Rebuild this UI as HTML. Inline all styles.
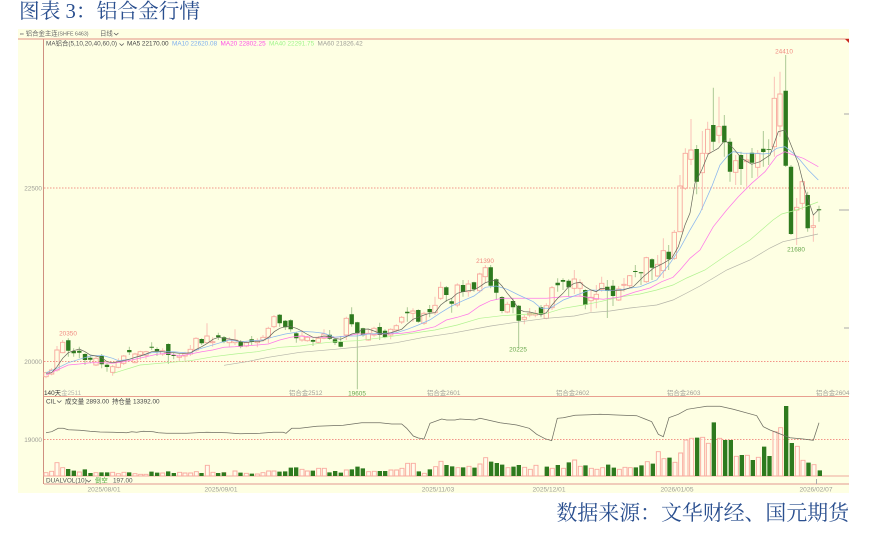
<!DOCTYPE html>
<html><head><meta charset="utf-8"><style>
html,body{margin:0;padding:0;background:#fff;width:881px;height:538px;overflow:hidden}
svg{position:absolute;left:0;top:0}
.t{font-family:"Liberation Sans","Noto Sans CJK SC",sans-serif;font-size:6.4px;fill:#666}
.g{fill:#a0a098}
.d{font-size:6.6px}
.h{position:absolute;color:#2a4f8f;font-family:"Liberation Serif","Noto Serif CJK SC",serif;line-height:24px;white-space:pre}
</style></head><body>
<div class="h" style="left:19px;top:0;font-size:20.7px">图表 3：铝合金行情</div>
<div class="h" style="right:32px;top:501px;font-size:20.9px">数据来源：文华财经、国元期货</div>
<svg width="881" height="538" viewBox="0 0 881 538" style="filter:blur(.22px)">
<rect x="18" y="29" width="831" height="464" fill="#feffe3"/>
<path d="M18 39H849" stroke="#ecb5a5" stroke-width="1.6"/>
<path d="M43.5 39V484" stroke="#cf9080"/>
<path d="M44 396.5H849" stroke="#e8a090"/>
<path d="M44 476H849" stroke="#eea89c"/>
<path d="M44 484H849" stroke="#ecbcac" stroke-width="1.5"/>
<path d="M845 39h4v4z" fill="#c8281e"/>
<path d="M844 114h5M839 210h10M844 328h5M816.5 479v5" stroke="#aaa"/>
<path d="M44 188H849M44 361.5H849M44 439.5H849" stroke="#f29488" stroke-dasharray="1.5 1.5"/>

<!-- up wicks -->
<path fill="none" stroke="#f9bcb2" stroke-width=".9" d="M46 371.7V372.7M46 376.7V378.3M51.6 368.3V370M51.6 374V375.3M57 346V350M57 370V371.7M62.7 340V342.3M62.7 352.7V353.3M96 356V358.3M96 365V366M112.7 365V366.7M112.7 372.3V375.7M118.3 358.3V361.7M118.3 367.3V368.3M123.7 355V356M123.7 363.3V365M135 352.7V354M135 362.7V363.3M140.3 350.7V351.7M140.3 355V360M146 350.7V351.7M146 355.3V359.3M162.7 348.3V350.7M162.7 354V356M179.3 354V356M179.3 357.3V361.7M185 351.7V353.3M185 356V360.7M190.3 345V349.3M190.3 354V356M196 337.3V338.3M196 350V351.7M207 323.3V336M207 342.7V343.3M212.7 337.3V341.7M212.7 342.7V346.7M229.3 337.3V340M229.3 342.7V346.7M235 329.3V340M235 342.7V345M246.3 341.7V342.7M246.3 346V347.3M257.3 338.3V340.7M257.3 342.7V347.3M263 335V337.3M263 340V341.7M268.3 326.7V328.3M268.3 337.3V343.3M274 315V316.7M274 326.7V328.3M302 330V336M302 340V341.7M307.3 336V337.3M307.3 340.7V341.7M318.3 336V338.3M318.3 342.3V343.3M324 329.3V334M324 338.3V339.3M346.3 316.7V318.3M346.3 335V340M368.3 329.3V333.3M368.3 340V340.7M374 326.7V328.3M374 335V336.7M390.7 328.3V329.3M390.7 335V339.3M396.3 324.3V325.7M396.3 330V331.7M401.7 316V317.3M401.7 322V324M413 308.3V311M413 313.3V321.7M424 311.7V313.3M424 323.3V325M435 296.7V305.3M435 312.7V315M440.7 281.7V287.3M440.7 298.3V300M457.3 283.3V285M457.3 305V307.3M468.3 280V284M468.3 291.7V296.7M479.7 272.7V274M479.7 290.7V292.7M485.3 265V267.7M485.3 276.7V283.3M507.3 301.7V304.3M507.3 312V313.3M524.3 315V317.3M524.3 319.3V324.3M529.7 308V313.3M529.7 315V317.3M535.3 310V313.3M535.3 315V317.3M546.3 303.3V305.7M546.3 318.3V319.3M552 286V287.7M552 307.7V310M574.3 270V279M574.3 288.3V294M580 279.3V282.7M580 288.3V296.7M591 290V297.3M591 300.7V311.7M596.3 285V294.3M596.3 299.3V308.3M601.7 276.7V283.3M601.7 289.3V291.7M618.7 286V289M618.7 300V301M624 278V284.3M624 285.3V291.7M629.7 275V275.7M629.7 285.7V288M646.3 256.7V257.7M646.3 281.7V283M657.7 255V264.3M657.7 276V276.7M663.3 238.3V250.7M663.3 270.7V278M674.3 230V232.3M674.3 258.3V260M680 175V186M680 231.7V232M685.3 148.3V153.3M685.3 188.3V190M691 119V150M691 159.3V165M702.3 131V153.3M702.3 172.7V210M707.7 121.7V129.3M707.7 153.3V155M719 96.7V126.7M719 135.3V143.3M735.7 155V160.7M735.7 172.3V185M746.7 153V160M746.7 161.7V186.7M757.7 150V153.3M757.7 167.3V176.7M774.3 76.7V98.3M774.3 146.7V156.7M780 71.7V94M780 126V136.7M796.7 198V207.3M796.7 210V245M802.3 180V181.7M802.3 203.3V210M813.3 215V225.7M813.3 227.3V241.7"/>
<!-- up bodies -->
<path fill="none" stroke="#f8a89d" stroke-width=".9" d="M43.8 372.7h4.4V376.7h-4.4zM49.4 370h4.4V374h-4.4zM54.8 350h4.4V370h-4.4zM60.5 342.3h4.4V352.7h-4.4zM93.8 358.3h4.4V365h-4.4zM110.5 366.7h4.4V372.3h-4.4zM116.1 361.7h4.4V367.3h-4.4zM121.5 356h4.4V363.3h-4.4zM132.8 354h4.4V362.7h-4.4zM138.1 351.7h4.4V355h-4.4zM143.8 351.7h4.4V355.3h-4.4zM160.5 350.7h4.4V354h-4.4zM177.1 356h4.4V357.3h-4.4zM182.8 353.3h4.4V356h-4.4zM188.1 349.3h4.4V354h-4.4zM193.8 338.3h4.4V350h-4.4zM204.8 336h4.4V342.7h-4.4zM210.5 341.7h4.4V342.7h-4.4zM227.1 340h4.4V342.7h-4.4zM232.8 340h4.4V342.7h-4.4zM244.1 342.7h4.4V346h-4.4zM255.1 340.7h4.4V342.7h-4.4zM260.8 337.3h4.4V340h-4.4zM266.1 328.3h4.4V337.3h-4.4zM271.8 316.7h4.4V326.7h-4.4zM299.8 336h4.4V340h-4.4zM305.1 337.3h4.4V340.7h-4.4zM316.1 338.3h4.4V342.3h-4.4zM321.8 334h4.4V338.3h-4.4zM344.1 318.3h4.4V335h-4.4zM366.1 333.3h4.4V340h-4.4zM371.8 328.3h4.4V335h-4.4zM388.5 329.3h4.4V335h-4.4zM394.1 325.7h4.4V330h-4.4zM399.5 317.3h4.4V322h-4.4zM410.8 311h4.4V313.3h-4.4zM421.8 313.3h4.4V323.3h-4.4zM432.8 305.3h4.4V312.7h-4.4zM438.5 287.3h4.4V298.3h-4.4zM455.1 285h4.4V305h-4.4zM466.1 284h4.4V291.7h-4.4zM477.5 274h4.4V290.7h-4.4zM483.1 267.7h4.4V276.7h-4.4zM505.1 304.3h4.4V312h-4.4zM522.1 317.3h4.4V319.3h-4.4zM527.5 313.3h4.4V315h-4.4zM533.1 313.3h4.4V315h-4.4zM544.1 305.7h4.4V318.3h-4.4zM549.8 287.7h4.4V307.7h-4.4zM572.1 279h4.4V288.3h-4.4zM577.8 282.7h4.4V288.3h-4.4zM588.8 297.3h4.4V300.7h-4.4zM594.1 294.3h4.4V299.3h-4.4zM599.5 283.3h4.4V289.3h-4.4zM616.5 289h4.4V300h-4.4zM621.8 284.3h4.4V285.3h-4.4zM627.5 275.7h4.4V285.7h-4.4zM644.1 257.7h4.4V281.7h-4.4zM655.5 264.3h4.4V276h-4.4zM661.1 250.7h4.4V270.7h-4.4zM672.1 232.3h4.4V258.3h-4.4zM677.8 186h4.4V231.7h-4.4zM683.1 153.3h4.4V188.3h-4.4zM688.8 150h4.4V159.3h-4.4zM700.1 153.3h4.4V172.7h-4.4zM705.5 129.3h4.4V153.3h-4.4zM716.8 126.7h4.4V135.3h-4.4zM733.5 160.7h4.4V172.3h-4.4zM744.5 160h4.4V161.7h-4.4zM755.5 153.3h4.4V167.3h-4.4zM772.1 98.3h4.4V146.7h-4.4zM777.8 94h4.4V126h-4.4zM794.5 207.3h4.4V210h-4.4zM800.1 181.7h4.4V203.3h-4.4zM811.1 225.7h4.4V227.3h-4.4z"/>
<!-- down wicks -->
<path fill="none" stroke="#a3c48c" stroke-width=".9" d="M68.3 338.3V356.7M73.7 348.3V356.7M79.3 346.7V358.3M85 353.3V365M90.3 356V363.3M101.7 354V368.3M107 363.3V371.7M129.3 346.7V355M151.7 342.3V350M157 347.3V356M168.3 343.3V364M173.7 352.7V359.3M201.7 338.3V345M218.3 332.7V340M224 336V343.3M240.7 340V348.3M251.7 336V345M279.7 314V326.7M285.3 320V330M290.7 319.3V331.7M296.3 331.7V342.7M313 338.7V346M329.7 330V340M335 338.3V345M340.7 336V347.3M351.7 307.3V326.7M357.3 321.7V389.3M363 327.7V336.7M379.7 322.7V340M385 329.3V338.3M407.3 307.3V321.7M418.3 309.3V322.7M429.7 305V317.3M446.3 286V301.7M451.7 298.3V312.7M463 280V296.7M474 281.7V291.7M490.7 265V288.3M496.3 278.3V300M502 296V313.3M513 298.3V313.3M518.7 305V348.3M541 305V317.3M557.7 278.3V291.7M563 278.3V290M568.7 279.3V296.7M585.3 289.3V309.3M607.3 280V318M613 280V306M635.3 265V277.3M641 271.7V285M652 258.3V280M668.7 245V270M696.7 145V194.3M713.3 87.7V150M724.3 115V156.7M730 138.3V181.7M741 151.7V185M752 148V178M763.3 131V166.7M768.7 139.3V165M785.7 55V167M791 165V235M807.7 191.7V231.7M819 205.7V221.7"/>
<!-- down bodies -->
<path fill="#2e7a1e" d="M66.1 340.3h4.4V350.7h-4.4zM71.5 351h4.4V353.3h-4.4zM77.1 350.7h4.4V352.7h-4.4zM82.8 354h4.4V360h-4.4zM88.1 357.7h4.4V359.7h-4.4zM99.5 356h4.4V364.3h-4.4zM104.8 364.7h4.4V367h-4.4zM127.1 350h4.4V352.3h-4.4zM149.5 346.7h4.4V347.7h-4.4zM154.8 349h4.4V351.7h-4.4zM166.1 344h4.4V355h-4.4zM171.5 355h4.4V356h-4.4zM199.5 339h4.4V343.3h-4.4zM216.1 335.3h4.4V337.3h-4.4zM221.8 337.3h4.4V341.7h-4.4zM238.5 341.7h4.4V346.7h-4.4zM249.5 339.3h4.4V342h-4.4zM277.5 314.7h4.4V323.3h-4.4zM283.1 320.7h4.4V327.3h-4.4zM288.5 320.3h4.4V329.3h-4.4zM294.1 333.3h4.4V338.3h-4.4zM310.8 340h4.4V341.7h-4.4zM327.5 334.7h4.4V338.7h-4.4zM332.8 339.3h4.4V342.7h-4.4zM338.5 342h4.4V346.7h-4.4zM349.5 314.3h4.4V324.3h-4.4zM355.1 322.3h4.4V333.3h-4.4zM360.8 328.3h4.4V335.3h-4.4zM377.5 327h4.4V335h-4.4zM382.8 330.7h4.4V337.3h-4.4zM405.1 311.7h4.4V313.3h-4.4zM416.1 310h4.4V321.7h-4.4zM427.5 309h4.4V312.3h-4.4zM444.1 287.3h4.4V295h-4.4zM449.5 301.3h4.4V303.7h-4.4zM460.8 285h4.4V292h-4.4zM471.8 282.3h4.4V289.3h-4.4zM488.5 267.3h4.4V285.7h-4.4zM494.1 279.3h4.4V292.7h-4.4zM499.8 297h4.4V311h-4.4zM510.8 301h4.4V307.3h-4.4zM516.5 305.7h4.4V320.7h-4.4zM538.8 307.3h4.4V314.3h-4.4zM555.5 282.7h4.4V285.3h-4.4zM560.8 280h4.4V281.7h-4.4zM566.5 280.7h4.4V287.3h-4.4zM583.1 290h4.4V305h-4.4zM605.1 286.7h4.4V290.7h-4.4zM610.8 285.7h4.4V296h-4.4zM633.1 271h4.4V272h-4.4zM638.8 272.3h4.4V273.3h-4.4zM649.8 259.3h4.4V267.7h-4.4zM666.5 251.7h4.4V259.3h-4.4zM694.5 149h4.4V181.7h-4.4zM711.1 125h4.4V141.7h-4.4zM722.1 125.7h4.4V142.3h-4.4zM727.8 141.7h4.4V171.7h-4.4zM738.8 155h4.4V169h-4.4zM749.8 152.7h4.4V162.7h-4.4zM761.1 148.7h4.4V152h-4.4zM766.5 149h4.4V149.7h-4.4zM783.5 90.7h4.4V165.7h-4.4zM788.8 166.7h4.4V234h-4.4zM805.5 195h4.4V228.3h-4.4zM816.8 209.3h4.4V210.3h-4.4z"/>

<!-- MA60 -->
<polyline fill="none" stroke="#b4b4a8" stroke-width=".7" points="224,365.3 246.7,361.7 268.3,357.3 300,352.3 335,349.3 368.3,346 396.3,342.7 424,337.3 451.7,333.3 490.7,326 513.3,322.7 546.7,318.3 574.3,316 590,312.7 610,311 630,308 656.7,305 673,300 686.7,293 700,286 726.7,270 750,260 770,248 783,241.7 800,238 818,234"/>
<!-- MA40 -->
<polyline fill="none" stroke="#b0f290" stroke-width=".7" points="113.3,373.3 140,365 166.7,362.7 190.3,360.7 213.3,356.7 235,354 257.3,351.7 279.7,347.3 300,346 320,343.3 335,341.7 357.3,340.7 385,337.3 407.3,334 435,330 457.3,325 479.7,318.3 502,315.7 530,314 546.7,313.3 563.3,308.3 583.3,305 600,301.7 620,297 640,294 656.7,290 673,285 686.7,278 705,270 726.7,255 750,240 773,220 781.7,214 796.7,210 818,202"/>
<!-- MA20 -->
<polyline fill="none" stroke="#ff78e8" stroke-width=".75" points="46,375 57,370 68.3,365 79.3,364 90.3,362.7 101.7,362.7 112.7,363.3 123.7,361.7 135,359.3 146,356.7 157,354.3 168.3,353.3 179.3,356 190.3,354 201.7,351.7 212.7,350 224,347.3 235,346.7 246.3,345.7 257.3,345 268.3,344 279.7,340 290.7,337.3 300,336 313,337.3 324,337.3 335,337.3 346.3,336 357.3,334 368.3,334 385,334 401.7,333.3 413,331.7 424,329.3 435,326.7 446.3,320 457.3,317.3 468.3,314 479.7,306 490.7,300.7 502,298.3 513.3,298.3 533.3,298.3 546.7,298.3 563.3,296.7 580,296 593.3,298.3 603.3,299.3 620,297 635,292 650,288 661.7,281.7 673,277.3 680,270 690,258.3 700,250 713.3,226.7 726.7,210 738.3,196.7 751.7,183.3 765,171.7 776.7,156 785,151.7 793.3,155 803.3,158.3 818.3,166.7"/>
<!-- MA10 -->
<polyline fill="none" stroke="#8ab6ee" stroke-width=".75" points="46,372.7 57,368.3 68.3,362.7 79.3,359.3 90.3,356 101.7,355.3 112.7,358.3 118.3,360.7 129.3,359.3 140.3,356 151.7,352.7 162.7,351.7 173.7,351.7 190.3,353.3 196,350 207,346.7 218.3,343.3 229.3,340 240.7,341.7 251.7,340.7 263,340 274,336.7 285.3,334 296.3,332.3 300,331.3 313,332 324,333.3 335,337.3 346.3,336 357.3,336 368.3,334 385,333.3 396.3,332.7 407.3,329.3 418.3,325 429.7,320 440.7,312.7 451.7,306 463,300.7 474,296 485.3,287.3 496.3,286 507.3,289.3 518.7,295 533.3,301.7 541,308.3 550,308.3 563.3,300 576.7,295 590,290 610,290.7 623.3,289.3 640,286.7 656.7,280 670,263.3 680,248.3 690,230 700,213 711.7,186.7 720,165 728.3,155 733.3,151.7 743.3,153.3 753.3,153.3 763.3,154 770,153.3 776.7,148.3 785,146.7 793.3,153.3 800,160 808.3,170 818.3,180"/>
<!-- MA5 -->
<polyline fill="none" stroke="#66665a" stroke-width=".7" points="46,373.3 51.6,372.7 57,366.7 62.7,358.3 68.3,352.7 73.7,350.7 79.3,349 85,351.7 90.3,355 96,356 101.7,357.7 107,361.7 112.7,362.7 118.3,361.7 123.7,360.7 129.3,359.3 135,357.3 140.3,356 146,354 151.7,351.7 157,351 162.7,351.7 168.3,352.7 174,352.7 179.3,353.3 185,353.3 190.7,352.7 196.3,349.3 201.7,346.7 207.4,343.3 213,339.3 218.5,337.3 224,338.3 229.6,339 235.2,340 240.8,341.7 246.3,342.7 252,341.7 257.5,341.7 263,340.7 268.6,337.3 274.2,331.7 279.7,328.3 285.3,326.7 290.9,326.7 296.4,328.3 300,330 306.7,334 313,337.3 318.3,337.3 324,336 329.7,336.7 335,338.3 340.7,339.3 346.3,336.7 351.7,334 357.3,332.7 363,329.3 368.3,329 374,331 379.7,333.3 385,334 390.7,332.7 396.3,331 401.7,329.3 407.3,324 413,319.3 418.3,317.3 424,315 429.7,313.3 435,312.7 440.7,305 446.3,300.7 451.7,298.3 457.3,293.3 463,291.7 468.3,290.7 474,290 479.7,286.7 485.3,282.7 490.7,281 496.3,280 502,286 507.3,293.3 513,300 518.7,309.3 524.3,311.7 529.7,312 535.3,313.3 541,315 546.3,312.7 552,305 557.7,298.3 563,293.3 568.7,286.7 574.3,283.3 580,282.3 585.3,286.7 591,290 596.3,291.7 601,288.3 607,289 613,290.7 623.3,290 633.3,286.7 643.3,276.7 653.3,268.3 663.3,263.3 671.7,258.3 678.3,246.7 685,225 690,213 695,183 701.7,170 708.3,154 718.3,148.3 725,140 733.3,148.3 741.7,158.3 751.7,164.3 760,161.7 770,155 778.3,131.7 785,130 791.7,146.7 798.3,163.3 805,190 813.3,215 819,209.3"/>

<!-- volume bars: 3x coords -->
<g transform="translate(0,385) scale(.33333)">
<path fill="#fffaf0" fill-opacity=".6" stroke="#f9a99e" stroke-width="2.8" d="M132 263h12V273h-12zM149 259h12V273h-12zM165 233h12V273h-12zM182 248h12V273h-12zM232 261h12V273h-12zM282 263h12V273h-12zM332 262h12V273h-12zM349 266h12V273h-12zM366 262h12V273h-12zM399 266h12V273h-12zM416 268h12V273h-12zM432 268h12V273h-12zM482 264h12V273h-12zM533 262h12V273h-12zM549 264h12V273h-12zM566 264h12V273h-12zM583 260h12V273h-12zM616 241h12V273h-12zM633 262h12V273h-12zM666 263h12V273h-12zM699 258h12V273h-12zM733 265h12V273h-12zM766 267h12V273h-12zM783 263h12V273h-12zM800 258h12V273h-12zM816 258h12V273h-12zM900 253h12V273h-12zM916 258h12V273h-12zM950 250h12V273h-12zM967 250h12V273h-12zM1033 255h12V273h-12zM1100 260h12V273h-12zM1117 259h12V273h-12zM1167 255h12V273h-12zM1184 255h12V273h-12zM1200 250h12V273h-12zM1217 235h12V273h-12zM1234 235h12V273h-12zM1267 265h12V273h-12zM1301 245h12V273h-12zM1317 229h12V273h-12zM1368 248h12V273h-12zM1401 244h12V273h-12zM1434 237h12V273h-12zM1451 218h12V273h-12zM1518 248h12V273h-12zM1568 247h12V273h-12zM1585 253h12V273h-12zM1602 241h12V273h-12zM1635 252h12V273h-12zM1651 250h12V273h-12zM1685 250h12V273h-12zM1718 225h12V273h-12zM1735 244h12V273h-12zM1768 250h12V273h-12zM1785 253h12V273h-12zM1802 248h12V273h-12zM1852 253h12V273h-12zM1869 247h12V273h-12zM1885 248h12V273h-12zM1936 230h12V273h-12zM1969 200h12V273h-12zM1986 221h12V273h-12zM2019 232h12V273h-12zM2036 204h12V273h-12zM2052 165h12V273h-12zM2069 160h12V273h-12zM2102 157h12V273h-12zM2119 175h12V273h-12zM2153 160h12V273h-12zM2203 214h12V273h-12zM2236 211h12V273h-12zM2269 217h12V273h-12zM2319 140h12V273h-12zM2336 128h12V273h-12zM2386 184h12V273h-12zM2403 226h12V273h-12zM2436 239h12V273h-12z"/>
<path fill="#2e7a1e" d="M198 252h13V273h-13zM215 257h13V273h-13zM248 253h13V273h-13zM265 264h13V273h-13zM298 262h13V273h-13zM315 262h13V273h-13zM381 262h13V273h-13zM448 260h13V273h-13zM465 263h13V273h-13zM498 259h13V273h-13zM515 264h13V273h-13zM598 264h13V273h-13zM648 264h13V273h-13zM665 262h13V273h-13zM715 263h13V273h-13zM749 266h13V273h-13zM832 260h13V273h-13zM849 259h13V273h-13zM866 248h13V273h-13zM882 247h13V273h-13zM932 257h13V273h-13zM982 262h13V273h-13zM999 258h13V273h-13zM1016 263h13V273h-13zM1049 253h13V273h-13zM1066 245h13V273h-13zM1082 250h13V273h-13zM1133 258h13V273h-13zM1149 258h13V273h-13zM1250 259h13V273h-13zM1283 253h13V273h-13zM1333 240h13V273h-13zM1350 244h13V273h-13zM1383 247h13V273h-13zM1417 248h13V273h-13zM1467 230h13V273h-13zM1484 234h13V273h-13zM1500 239h13V273h-13zM1534 245h13V273h-13zM1550 240h13V273h-13zM1634 245h13V273h-13zM1667 240h13V273h-13zM1700 232h13V273h-13zM1750 241h13V273h-13zM1818 239h13V273h-13zM1835 248h13V273h-13zM1901 247h13V273h-13zM1918 241h13V273h-13zM1952 236h13V273h-13zM2002 218h13V273h-13zM2085 158h13V273h-13zM2135 112h13V273h-13zM2169 165h13V273h-13zM2186 165h13V273h-13zM2219 210h13V273h-13zM2252 225h13V273h-13zM2286 185h13V273h-13zM2302 213h13V273h-13zM2352 63h13V273h-13zM2369 174h13V273h-13zM2419 233h13V273h-13zM2453 256h13V273h-13z"/>
</g>
<!-- OI line -->
<polyline fill="none" stroke="#6e6e62" stroke-width=".75" points="46,432.7 51.7,431.7 58.3,428.3 63.3,428.3 68.3,429.7 80,430.3 90,431.3 100,432 113.3,432.3 126.7,432.7 131.7,431.7 136.7,432.3 143.3,431.3 153.3,431.7 158.3,432.7 166.7,433.3 186.7,433.3 206.7,432.3 226.7,432.7 240,433.7 260,433.3 273.3,432.3 283.3,432.3 286,433.3 291.7,428.3 300,428.3 316.7,426.3 343.3,425.3 361.7,422.7 380,422.7 391.7,424 401.7,424 406.7,428.3 413.3,436 418.3,438 424,439 430,423.3 441.7,419 446.7,420 455,420 460,419 475,420 480,418.3 486.7,419.7 500,422.7 516.7,425 529.3,428.3 536.7,434.3 545,438.7 551.7,440.7 557.3,418.3 563.3,417.7 575,415.3 590,414.7 600,414.3 616.7,415 636.7,415.7 645,419 651.7,421.7 658.3,434.3 663.3,436.7 669,417.7 678.3,414.3 687.3,409.3 706.7,406.3 720,406.3 733.3,409.3 756.7,415.7 763.3,426.7 770,430 790,437.7 803.3,439 813.3,440.3 819,422.7"/>

<!-- chevrons -->
<path fill="none" stroke="#555" stroke-width=".7" d="M114 33l2.2 2 2.2-2M119.5 43.5l2.2 2 2.2-2M57 400.5l2.2 2 2.2-2M86.5 480l2.2 2 2.2-2"/>

<!-- text -->
<text class="t" x="20" y="35.5" style="fill:#6a6a6a"><tspan style="font-size:5.5px">∞</tspan> 铝合金主连<tspan style="font-size:5.3px">(SHFE 6463)</tspan></text>
<text class="t" x="100" y="35.5">日线</text>
<text class="t" x="46" y="45.5" style="fill:#555">MA铝合(5,10,20,40,60,0)</text>
<text class="t" x="127" y="45.5" style="fill:#444">MA5 22170.00</text>
<text class="t" x="172" y="45.5" style="fill:#7fb0ee">MA10 22620.08</text>
<text class="t" x="220.5" y="45.5" style="fill:#ff4fe6">MA20 22802.25</text>
<text class="t" x="269" y="45.5" style="fill:#9ff58a">MA40 22291.75</text>
<text class="t" x="317.5" y="45.5" style="fill:#a0a098">MA60 21826.42</text>
<text class="t g" x="42" y="190.5" text-anchor="end">22500</text>
<text class="t g" x="42" y="364" text-anchor="end">20000</text>
<text class="t g" x="42" y="442" text-anchor="end">19000</text>
<text class="t" x="784" y="53.5" text-anchor="middle" style="fill:#f08a80">24410</text>
<text class="t" x="485" y="263" text-anchor="middle" style="fill:#f08a80">21390</text>
<text class="t" x="68" y="335.5" text-anchor="middle" style="fill:#f08a80">20350</text>
<text class="t" x="518" y="351.5" text-anchor="middle" style="fill:#6aa84f">20225</text>
<text class="t" x="357" y="395.5" text-anchor="middle" style="fill:#6aa84f">19605</text>
<text class="t" x="796" y="251.5" text-anchor="middle" style="fill:#6aa84f">21680</text>
<text class="t" x="44" y="395" style="fill:#333">140天<tspan style="fill:#b5b5ac">金2511</tspan></text>
<text class="t g" x="289" y="395">铝合金2512</text>
<text class="t g" x="427" y="395">铝合金2601</text>
<text class="t g" x="556" y="395">铝合金2602</text>
<text class="t g" x="667" y="395">铝合金2603</text>
<text class="t g" x="816" y="395">铝合金2604</text>
<text class="t" x="46" y="403.5" style="fill:#444">CIL</text>
<text class="t" x="65" y="403.5" style="fill:#444">成交量 2893.00</text>
<text class="t" x="112" y="403.5" style="fill:#444">持仓量 13392.00</text>
<text class="t" x="46" y="482.5" style="fill:#555">DUALVOL(10)</text>
<text class="t" x="95" y="482.5" style="fill:#4da63a">倒空</text>
<text class="t" x="113" y="482.5" style="fill:#555">197.00</text>
<text class="t g d" x="104" y="491.5" text-anchor="middle">2025/08/01</text>
<text class="t g d" x="221" y="491.5" text-anchor="middle">2025/09/01</text>
<text class="t g d" x="438" y="491.5" text-anchor="middle">2025/11/03</text>
<text class="t g d" x="549" y="491.5" text-anchor="middle">2025/12/01</text>
<text class="t g d" x="677" y="491.5" text-anchor="middle">2026/01/05</text>
<text class="t g d" x="816" y="491.5" text-anchor="middle">2026/02/07</text>
</svg>
</body></html>
